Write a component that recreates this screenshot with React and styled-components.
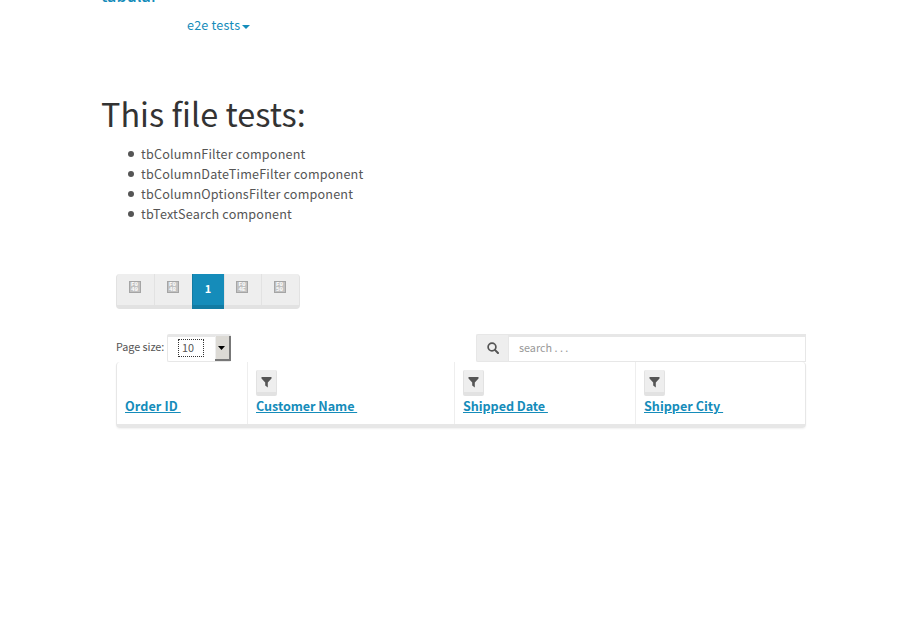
import React from 'react';
import styled, { createGlobalStyle, css } from 'styled-components';

const Global = createGlobalStyle`
  * { box-sizing: border-box; }
  html, body { margin: 0; height: 620px; overflow: hidden; background: #fff; }
  body { font: 12.6px/20px "Noto Sans CJK SC", "Open Sans", sans-serif; color: #555; }
`;
const Page = styled.main`
  width: 720px;
  margin-left: 101px;
`;
const Header = styled.header`
  height: 109px;
`;
const Brand = styled.a`
  display: block;
  height: 16px;
  margin-top: -15px;
  font-size: 16.2px;
  font-weight: 500;
  line-height: 20px;
  letter-spacing: .05px;
  color: #158cba;
`;
const NavLink = styled.a`
  display: flex;
  align-items: center;
  gap: 2px;
  margin: 14px 0 0 86px;
  letter-spacing: .2px;
  color: #158cba;
`;
const Caret = styled.span`
  border: 4px solid transparent;
  border-top-color: #158cba;
  border-bottom: 0;
  margin-top: 3px;
`;
const Title = styled.h1`
  margin: 0;
  font-size: 32.4px;
  line-height: 38px;
  font-weight: 400;
  letter-spacing: .03px;
  color: #333;
`;
const Tests = styled.ul`
  margin: 12px 0 0;
  padding: 0 0 0 27px;
  list-style: none;
`;
const Test = styled.li`
  display: flex;
  align-items: center;
  gap: 7px;
  letter-spacing: .19px;
  &::before {
    content: '';
    width: 6px;
    height: 6px;
    border-radius: 50%;
    background: #555;
  }
`;
const Panel = styled.section`
  width: 690px;
  margin: 50px 0 0 15px;
`;
const Pager = styled.nav`
  display: flex;
  width: 184px;
  height: 35px;
`;
const PageButton = styled.span`
  display: flex;
  justify-content: center;
  width: ${p => p.$w}px;
  padding: 7px 2px 0 0;
  background: #eee;
  border: solid #e2e2e2;
  border-width: 0 0 4px 1px;
  font-size: 11px;
  line-height: 16px;
  &:first-child { border-radius: 4px 0 0 4px; }
  &:last-child { border-radius: 0 4px 4px 0; border-right-width: 1px; }
  ${p => p.$active && css`
    padding: 6px 1px 0 0;
    background: #158cba;
    border-color: #127ba3;
    color: #fff;
    font-weight: 700;
  `}
`;
const CodeBox = styled.span`
  width: 12px;
  height: 12px;
  border: 1px solid #a5a5a5;
  background: #c2c2c2;
  color: #fff;
  font: 700 6px/5px "Liberation Mono", monospace;
  text-align: center;
  white-space: pre-line;
`;
const Tools = styled.div`
  display: flex;
  align-items: flex-start;
  height: 28px;
  margin-top: 25px;
  font-size: 10.8px;
`;
const Label = styled.label`
  width: 51px;
  line-height: 25px;
  letter-spacing: -.05px;
  white-space: nowrap;
`;
const Select = styled.div`
  display: flex;
  justify-content: space-between;
  width: 64px;
  height: 28px;
  border: 1px solid #e7e7e7;
  border-top-width: 3px;
  border-right: 0;
  border-radius: 2px;
  padding-left: 10px;
`;
const Value = styled.span`
  width: 26px;
  height: 18px;
  margin-top: 2px;
  border: 1px dotted #333;
  padding-left: 3px;
  line-height: 15px;
`;
const Arrow = styled.span`
  display: flex;
  align-items: center;
  justify-content: center;
  width: 16px;
  height: 25px;
  margin: -1px 0 0 0;
  padding-right: 1px;
  background: #dcdad5;
  border: solid #777;
  border-width: 0 2px 2px 0;
  box-shadow: inset 1px 0 #eee;
`;
const Search = styled.div`
  display: flex;
  width: 330px;
  height: 28px;
  margin-left: auto;
`;
const Addon = styled.span`
  display: flex;
  align-items: center;
  justify-content: center;
  width: 32px;
  background: #eee;
  border: 1px solid #e7e7e7;
  border-right: 0;
  border-radius: 2px 0 0 2px;
`;
const Field = styled.span`
  flex: 1;
  padding-left: 10px;
  border: 1px solid #e7e7e7;
  border-top-width: 3px;
  line-height: 21px;
  color: #999;
`;
const Table = styled.div`
  display: grid;
  grid-template-columns: 131px 207px 181px 1fr;
  height: 66px;
  border: 1px solid #e7e7e7;
  border-width: 0 1px 4px;
  border-radius: 4px;
  box-shadow: 0 1px 2px rgba(0,0,0,.06);
`;
const Cell = styled.div`
  display: flex;
  flex-direction: column;
  justify-content: flex-end;
  align-items: flex-start;
  padding: 8px;
  border-right: 1px solid #eee;
  &:last-child { border-right: 0; }
`;
const Filter = styled.button`
  display: flex;
  justify-content: center;
  width: 21px;
  height: 26px;
  padding: 7px 0 0;
  background: #eee;
  border: 1px solid #e2e2e2;
  border-width: 0 1px 4px;
  border-radius: 2px;
`;
const Sort = styled.a`
  font-weight: 700;
  color: #158cba;
  text-decoration: underline;
  letter-spacing: ${p => p.$spacing}px;
  white-space: pre;
`;

const tests = ['tbColumnFilter component', 'tbColumnDateTimeFilter component', 'tbColumnOptionsFilter component', 'tbTextSearch component'];
const columns = [['Order ID ', false, .1], ['Customer Name ', true, -.06], ['Shipped Date ', true, -.06], ['Shipper City ', true, 0]];

const Funnel = () => (
  <svg width="11" height="11" viewBox="0 0 11 11" fill="#555"><path d="M.5 0h10v1.500L6.800 5.500V10.500L4.200 8.500V5.500L.5 1.500z" /></svg>
);
const Magnifier = () => (
  <svg width="12" height="12" viewBox="0 0 12 12" fill="none" stroke="#555"><circle cx="5" cy="5" r="3.900" strokeWidth="1.700" /><path d="M7.900 7.900L11 11" strokeWidth="2" strokeLinecap="round" /></svg>
);
const Triangle = () => (
  <svg width="7" height="4" viewBox="0 0 7 4"><path d="M0 0h7L3.500 4z" fill="#000" /></svg>
);

export default function App() {
  return (
    <>
      <Global />
      <Page>
        <Header>
          <Brand>tabular</Brand>
          <NavLink>e2e tests<Caret /></NavLink>
        </Header>
        <Title>This file tests:</Title>
        <Tests>{tests.map(t => <Test key={t}>{t}</Test>)}</Tests>
        <Panel>
          <Pager>
            <PageButton $w={38}><CodeBox>{'F0\n49'}</CodeBox></PageButton>
            <PageButton $w={38}><CodeBox>{'F0\n48'}</CodeBox></PageButton>
            <PageButton $w={32} $active>1</PageButton>
            <PageButton $w={37}><CodeBox>{'F0\n4E'}</CodeBox></PageButton>
            <PageButton $w={39}><CodeBox>{'F0\n50'}</CodeBox></PageButton>
          </Pager>
          <Tools>
            <Label>Page size:</Label>
            <Select><Value>10</Value><Arrow><Triangle /></Arrow></Select>
            <Search><Addon><Magnifier /></Addon><Field>search . . .</Field></Search>
          </Tools>
          <Table>
            {columns.map(([name, filter, spacing]) => (
              <Cell key={name}>{filter && <Filter><Funnel /></Filter>}<Sort $spacing={spacing}>{name}</Sort></Cell>
            ))}
          </Table>
        </Panel>
      </Page>
    </>
  );
}
